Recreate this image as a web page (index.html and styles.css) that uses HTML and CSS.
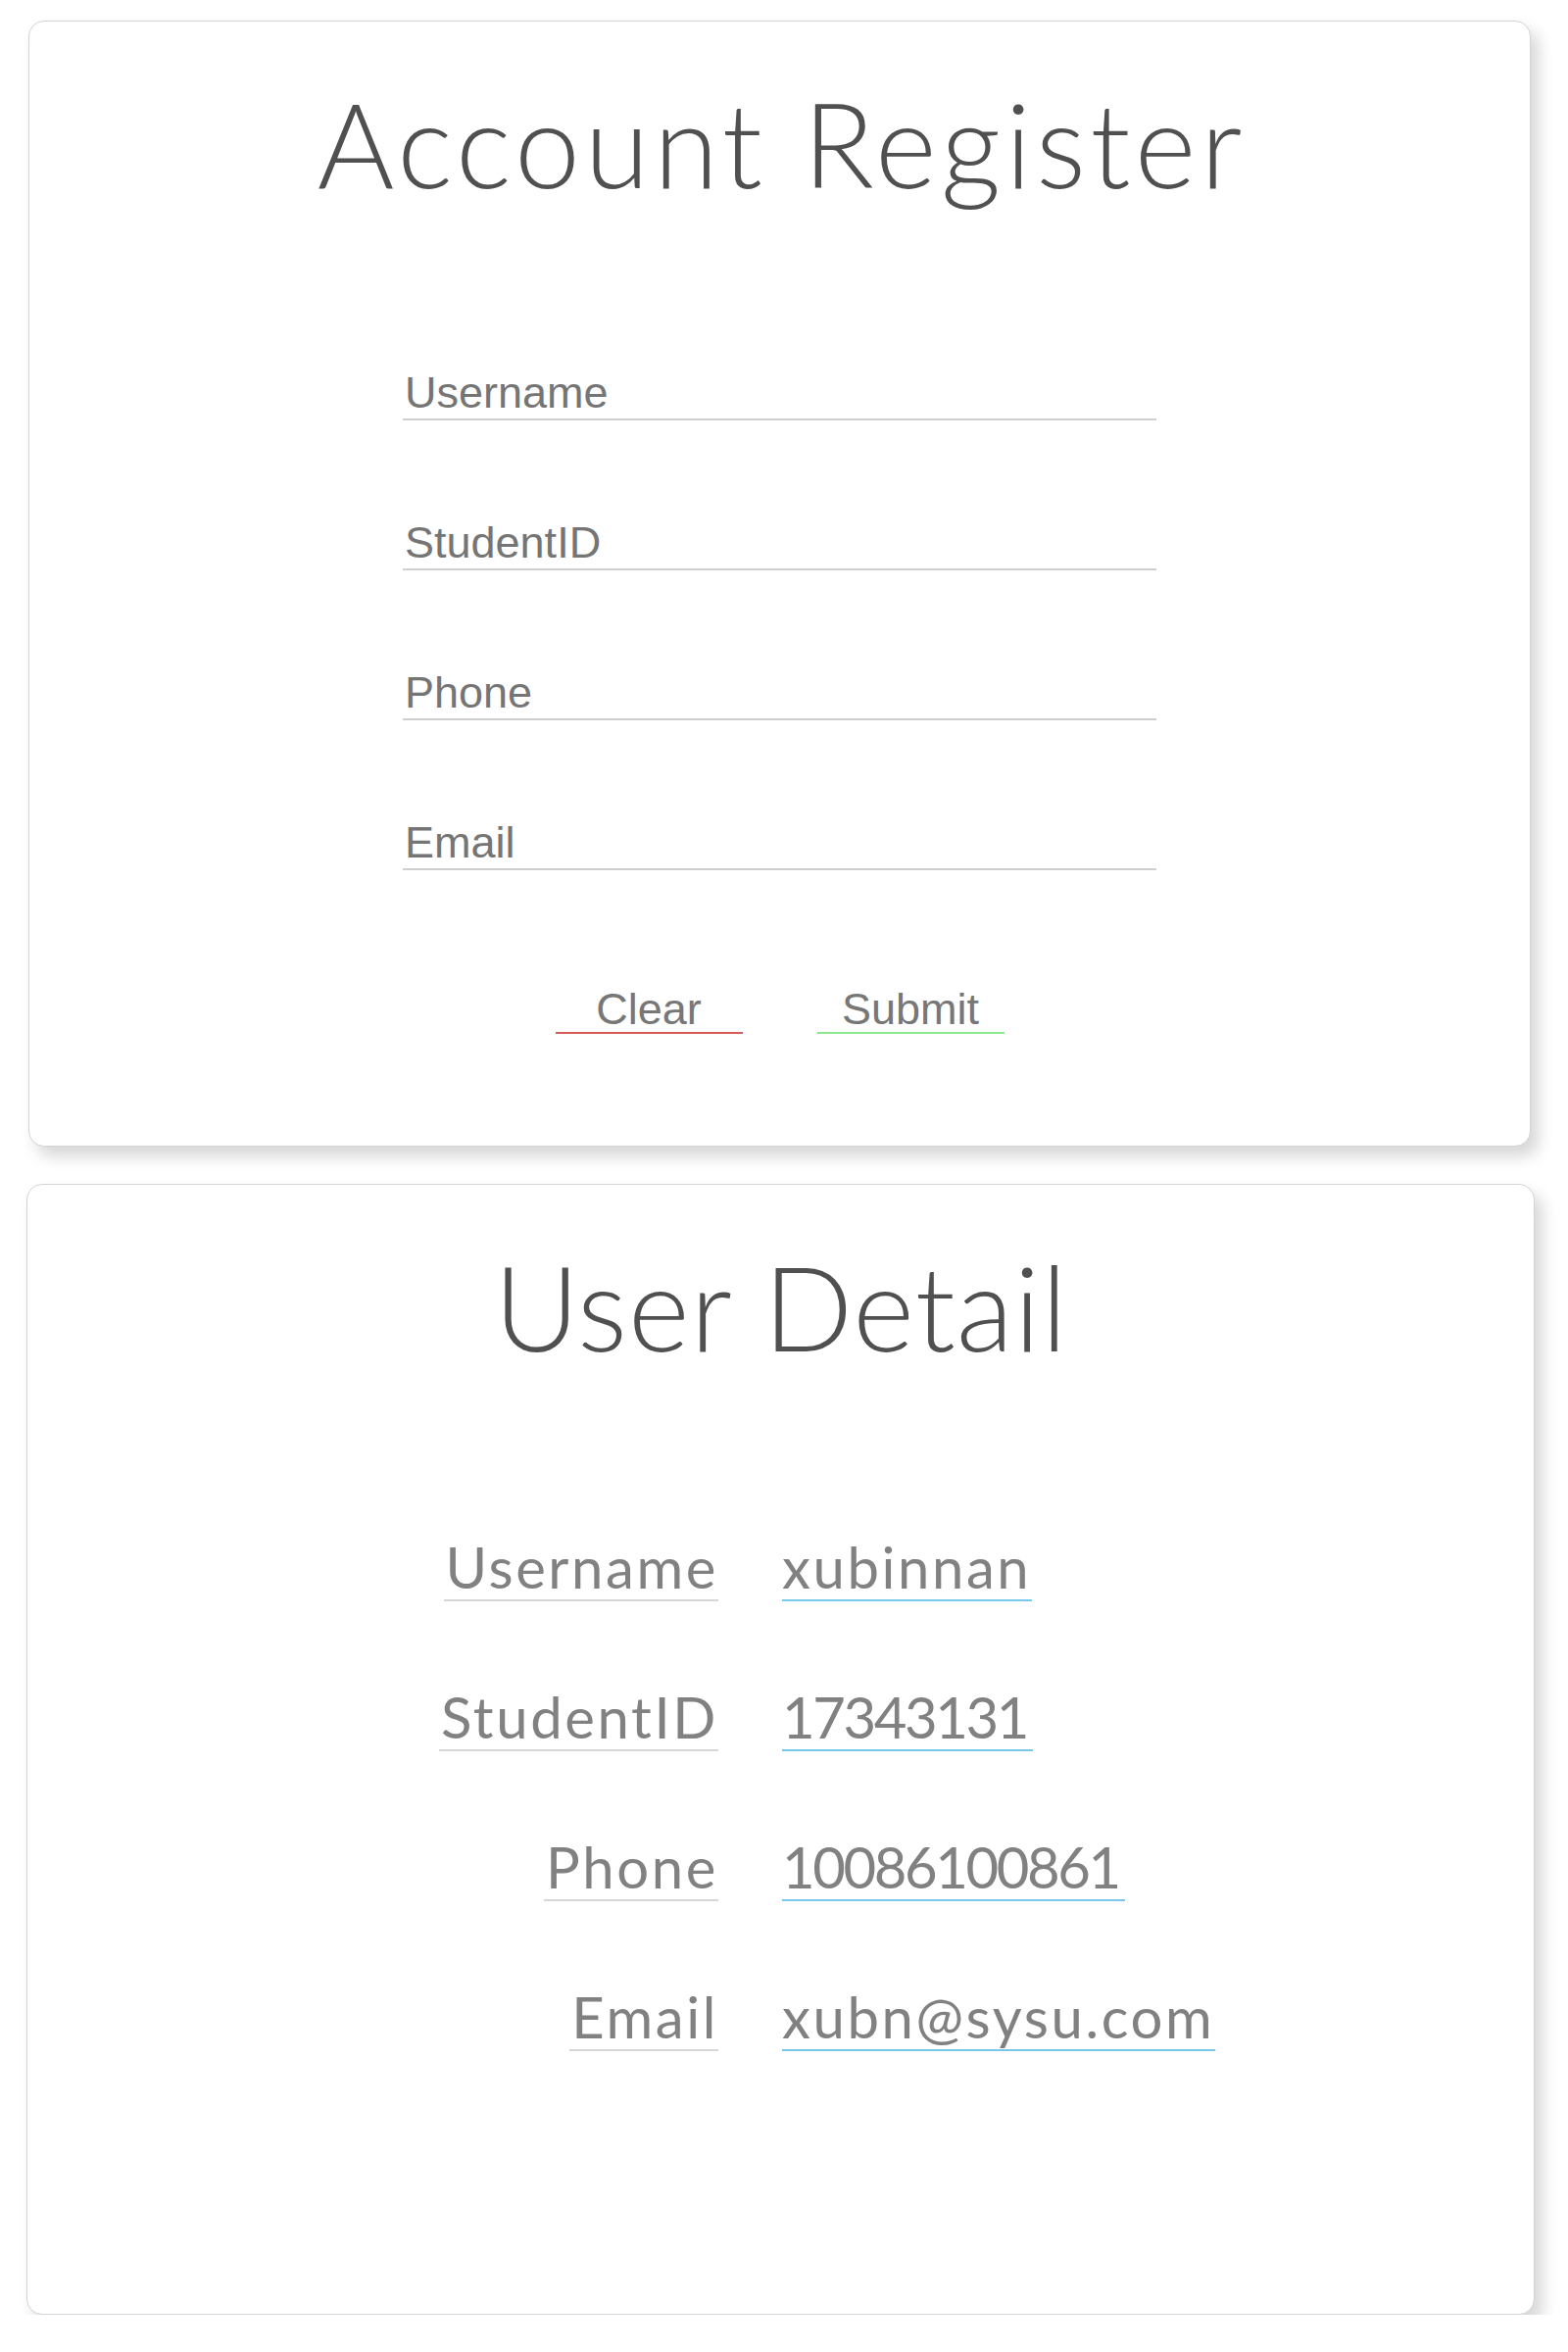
FILE: index.html
```html
<!DOCTYPE html>
<html lang="en">
<head>
<meta charset="utf-8">
<title>Account Register</title>
<link rel="stylesheet" href="styles.css">
</head>
<body>
<div class="page">
  <section class="card card-register">
    <h1 class="card-title card-title-wide">Account Register</h1>
    <form class="register-form">
      <input class="field" type="text" name="username" placeholder="Username">
      <input class="field" type="text" name="sid" placeholder="StudentID">
      <input class="field" type="text" name="phone" placeholder="Phone">
      <input class="field" type="text" name="email" placeholder="Email">
      <div class="actions">
        <button type="reset" class="btn btn-clear">Clear</button>
        <button type="button" class="btn btn-submit">Submit</button>
      </div>
    </form>
  </section>
  <section class="card card-detail">
    <h1 class="card-title">User Detail</h1>
    <dl class="detail-list">
      <dt class="detail-key"><span class="detail-label">Username</span></dt>
      <dd class="detail-val"><span class="detail-value">xubinnan</span></dd>
      <dt class="detail-key"><span class="detail-label">StudentID</span></dt>
      <dd class="detail-val"><span class="detail-value detail-value-num">17343131</span></dd>
      <dt class="detail-key"><span class="detail-label">Phone</span></dt>
      <dd class="detail-val"><span class="detail-value detail-value-num">10086100861</span></dd>
      <dt class="detail-key"><span class="detail-label">Email</span></dt>
      <dd class="detail-val"><span class="detail-value">xubn@sysu.com</span></dd>
    </dl>
  </section>
</div>
</body>
</html>
```
FILE: styles.css
```css
html, body {
  margin: 0;
  padding: 0;
  background: #ffffff;
}

.page {
  display: flex;
  flex-direction: column;
  gap: 38px;
  padding-top: 21px;
}

.card {
  box-sizing: border-box;
  background: #ffffff;
  border: 1px solid #d4d4d4;
  border-radius: 16px;
  box-shadow: 8px 10px 16px rgba(0, 0, 0, 0.16);
  padding-top: 64px;
}

.card-register {
  margin-left: 29px;
  width: 1533px;
  height: 1149px;
}

.card-detail {
  margin-left: 27px;
  width: 1539px;
  height: 1154px;
}

.card-title {
  margin: 0;
  font-family: "Lato", "DejaVu Sans", sans-serif;
  font-weight: 300;
  font-size: 120px;
  line-height: 120px;
  color: #505050;
  text-align: center;
  letter-spacing: 1px;
  text-indent: 1px;
}

.card-title-wide {
  letter-spacing: 4.5px;
  text-indent: 4.5px;
}

.register-form {
  width: 769px;
  margin: 169px auto 0;
  display: flex;
  flex-direction: column;
  gap: 99px;
}

.field {
  box-sizing: content-box;
  display: block;
  width: 765px;
  height: 52px;
  margin: 0;
  padding: 0 2px;
  border: none;
  border-bottom: 2px solid #cfcfcf;
  outline: none;
  background: transparent;
  font-family: "Liberation Sans", Arial, sans-serif;
  font-size: 45px;
  color: #555;
}

.field::placeholder {
  color: #757575;
  opacity: 1;
}

.actions {
  margin-top: 20px;
  display: flex;
  justify-content: center;
  gap: 76px;
}

.btn {
  box-sizing: content-box;
  width: 191px;
  height: 46px;
  padding: 0;
  margin: 0;
  border: none;
  border-bottom: 2px solid #d9534f;
  background: transparent;
  font-family: "Liberation Sans", Arial, sans-serif;
  font-size: 45px;
  line-height: 46px;
  color: #777777;
  cursor: pointer;
}

.btn-clear {
  border-bottom-color: #d65c5c;
}

.btn-submit {
  border-bottom-color: #8de88d;
}

.detail-list {
  margin: 173px 0 0;
  display: grid;
  grid-template-columns: 705px auto;
  column-gap: 65px;
  row-gap: 85px;
}

.detail-key,
.detail-val {
  margin: 0;
  display: flex;
}

.detail-key {
  justify-content: flex-end;
}

.detail-val {
  justify-content: flex-start;
}

.detail-label,
.detail-value {
  display: block;
  font-family: "Lato", "DejaVu Sans", sans-serif;
  font-weight: 400;
  font-size: 58px;
  line-height: 66px;
  color: #818181;
  letter-spacing: 2.6px;
}

.detail-label {
  padding: 0 0 0 2px;
  border-bottom: 2px solid #d6d6d6;
}

.detail-value {
  padding: 0 1px 0 0;
  border-bottom: 2px solid #77c8ea;
}

.detail-value-num {
  letter-spacing: -2.4px;
  padding-right: 6px;
}
```
